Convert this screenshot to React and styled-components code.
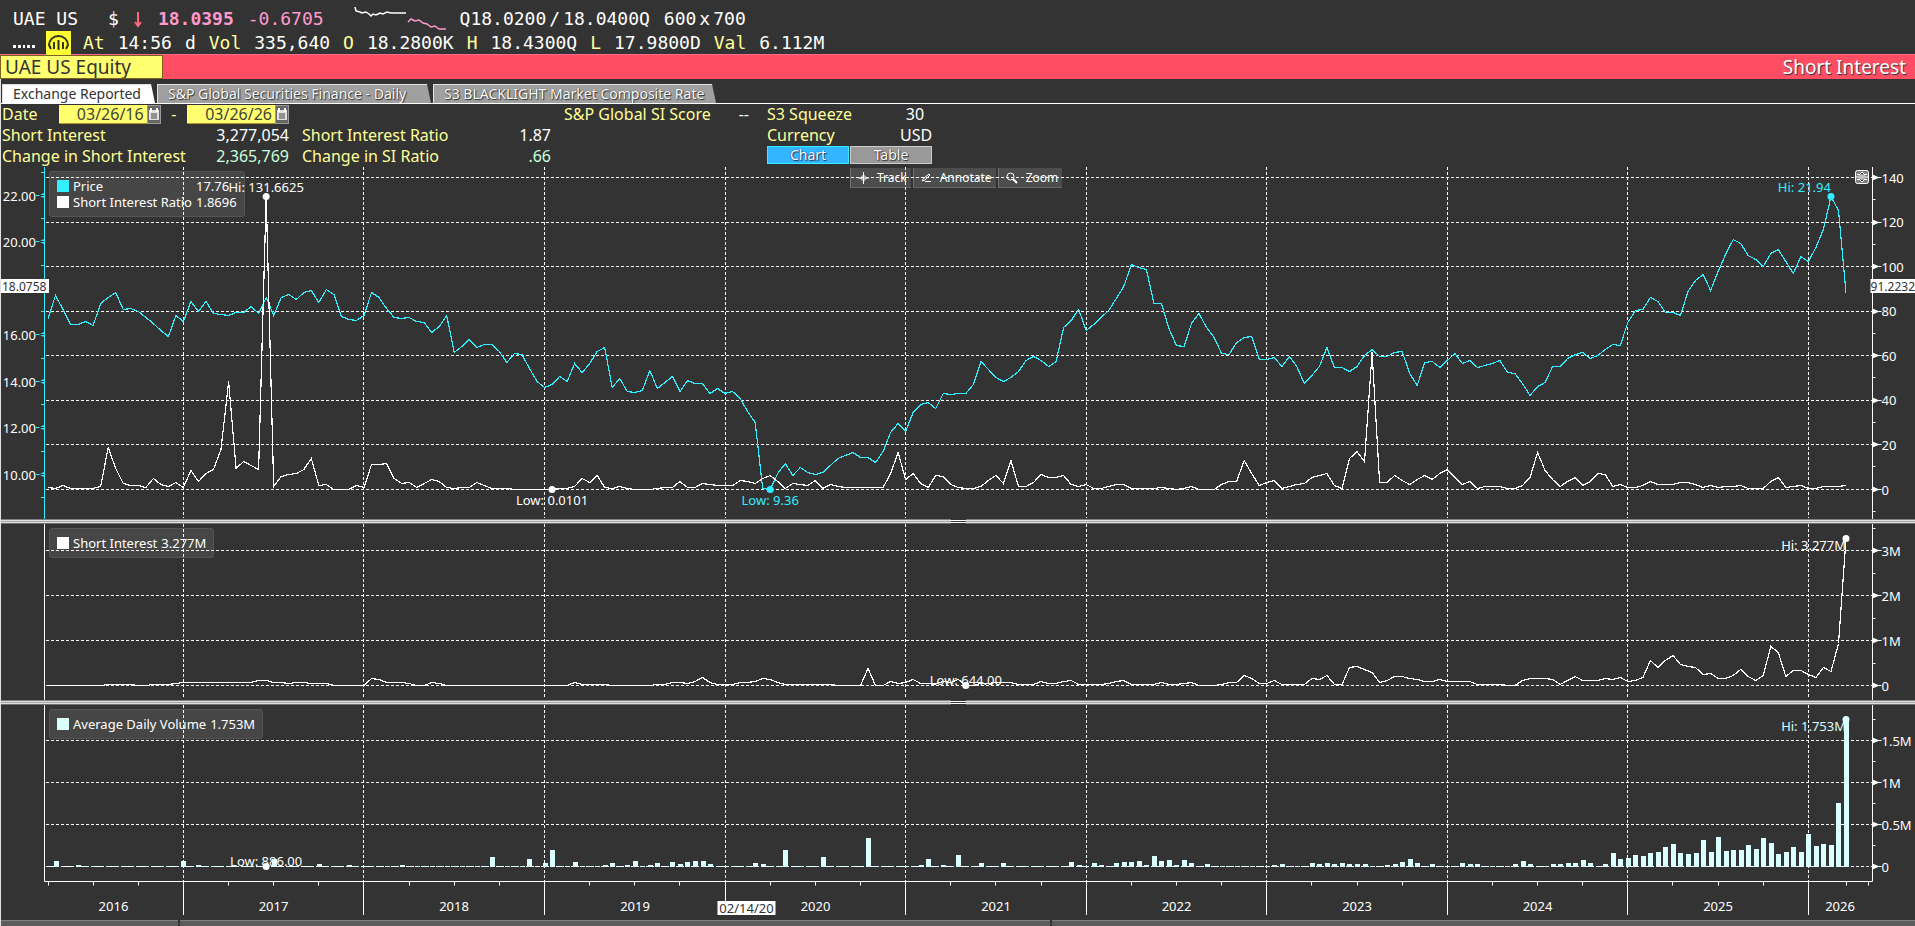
import React, { useEffect, useRef, useState } from 'react';
import styled, { createGlobalStyle } from 'styled-components';

const GlobalStyle = createGlobalStyle`
  * {
    box-sizing: border-box;
  }

  body {
    margin: 0;
    background: #333333;
    color: #ffffff;
    font-family: 'Noto Sans', 'Open Sans', sans-serif;
    font-size: 16px;
  }

  button,
  input {
    font-family: inherit;
    margin: 0;
  }
`;

const CYAN = '#33eeff';
const PALE = '#d9ffff';

/* ---------- quote header ---------- */

const Quote = styled.header`
  height: 54px;
  padding: 7px 0 0 13px;
  font-family: 'DejaVu Sans Mono', monospace;
  font-size: 18px;
  line-height: 24px;
  white-space: pre;
`;

const QuoteLine = styled.div`
  display: flex;
  align-items: center;
  gap: ${(p) => p.$gap}px;
  height: 24px;
`;

const Ticker = styled.span`
  margin-right: 16px;
`;

const Last = styled.span`
  color: #ff99cc;
  font-weight: bold;
`;

const Change = styled.span`
  color: #ff99cc;
  margin-right: 16px;
`;

const BidAsk = styled.span`
  display: flex;
  gap: 3px;
`;

const Tag = styled.span`
  color: #ffff99;
`;

const Dots = styled.span`
  display: flex;
  gap: 2px;
  width: 22px;
  padding-top: 7px;

  i {
    width: 3px;
    height: 3px;
    background: #ffffff;
  }
`;

const Gauge = styled.svg`
  width: 25px;
  height: 24px;
  background: #ffff33;
  margin: 0 -1px 0 -2px;
`;

const Band = styled.div`
  display: flex;
  align-items: center;
  justify-content: space-between;
  height: 25px;
  padding-right: 9px;
  background: #ff4d64;
  border-top: 1px solid #ff6b88;
`;

const Security = styled.input`
  width: 163px;
  height: 24px;
  padding: 0 4px;
  border: 1px solid #806020;
  background: #ffff70;
  color: #333333;
  font-size: 19px;
  line-height: 22px;
`;

const Title = styled.h1`
  margin: 0;
  font-size: 19px;
  line-height: 24px;
  font-weight: 400;
  text-shadow: 1px 1px 1px #333333;
`;

/* ---------- tabs ---------- */

const Page = styled.main`
  border-left: 1px solid #e0e0e0;
`;

const Tabs = styled.nav`
  display: flex;
  gap: 2px;
  padding: 5px 0 0 1px;
  border-bottom: 1px solid #ffffff;
`;

const Tab = styled.button`
  width: ${(p) => p.$width}px;
  height: 19px;
  padding: 0 0 0 10px;
  border: 0;
  border-top: 1px solid #e0e0e0;
  border-left: 1px solid #e0e0e0;
  background: ${(p) => (p.$active ? '#ffffff' : '#a0a0a0')};
  color: ${(p) => (p.$active ? '#333333' : '#ffffff')};
  font-size: 14px;
  line-height: 18px;
  text-align: left;
  white-space: nowrap;
  text-shadow: ${(p) => (p.$active ? 'none' : '0 0 1px #333333, 1px 1px 1px #333333')};
  clip-path: polygon(0 0, calc(100% - 4px) 0, 100% 100%, 0 100%);
`;

/* ---------- summary form ---------- */

const Summary = styled.section`
  display: flex;
  height: 63px;
  line-height: 21px;
  padding-left: 1px;
  white-space: nowrap;
`;

const Block = styled.div`
  width: ${(p) => p.$width}px;
  margin-right: ${(p) => p.$after || 0}px;
  padding-top: ${(p) => (p.$skipRow ? 21 : 0)}px;
`;

const Row = styled.div`
  display: flex;
  justify-content: space-between;
  align-items: center;
  height: 21px;
`;

const Name = styled.label`
  color: #ffff99;
`;

const Value = styled.span`
  color: ${(p) => (p.$pale ? '#ccffdd' : '#ffffff')};
`;

const Centered = styled.span`
  width: 30px;
  margin-right: 2px;
  text-align: center;
`;

const DateField = styled.span`
  display: flex;
  height: 19px;
`;

const DateInput = styled.input`
  width: 88px;
  height: 19px;
  padding: 0 3px 0 0;
  border: 0;
  border-bottom: 1px solid #b38f33;
  background: #ffff70;
  color: #444433;
  text-align: right;
  font-size: 16px;
`;

const CalendarButton = styled.button`
  width: 14px;
  height: 19px;
  padding: 0;
  border: 1px solid #999999;
  background: #666666;

  svg {
    display: block;
  }
`;

const Switch = styled.div`
  display: flex;
  gap: 1px;
`;

const ViewButton = styled.button`
  width: 82px;
  height: 18px;
  padding: 0;
  border: 1px solid ${(p) => (p.$on ? '#33eeff' : '#cccccc')};
  background: ${(p) => (p.$on ? '#33b5ff' : '#999999')};
  color: #ffffff;
  font-size: 14px;
  line-height: 16px;
  text-shadow: 0 0 1px ${(p) => (p.$on ? '#0033cc' : '#333333')}, 1px 1px 1px #333333;
`;

/* ---------- charts ---------- */

const Panel = styled.section`
  position: relative;
`;

const Canvas = styled.svg`
  position: relative;
  z-index: 1;
  display: block;
  width: 100%;
  height: ${(p) => p.$height}px;
  pointer-events: none;
  font-size: 13px;
  fill: #ffffff;
`;

const Legend = styled.div`
  position: absolute;
  left: 48px;
  top: 4px;
  display: grid;
  grid-template-columns: 12px auto auto;
  column-gap: 4px;
  align-items: center;
  padding: 6px 7px;
  border: 1px solid #555555;
  border-radius: 3px;
  background: #464646;
  font-size: 13px;
  line-height: 16px;
  white-space: nowrap;
`;

const Swatch = styled.i`
  width: 12px;
  height: 12px;
  background: ${(p) => p.$color};
`;

const Tools = styled.div`
  position: absolute;
  left: 849px;
  top: 1px;
  display: flex;
  gap: 2px;
`;

const Tool = styled.button`
  display: flex;
  align-items: center;
  gap: 8px;
  height: 20px;
  padding: 0 4px 0 7px;
  border: 0;
  border-left: 1px solid #707070;
  border-bottom: 1px solid #666666;
  background: #4d4d4d;
  color: #ffffff;
  font-size: 12px;
  white-space: nowrap;
`;

const MenuButton = styled.button`
  position: absolute;
  z-index: 2;
  right: 46px;
  top: 3px;
  width: 14px;
  height: 14px;
  padding: 0;
  border: 0;
  background: none;

  svg {
    display: block;
  }
`;

const Splitter = styled.div`
  display: flex;
  justify-content: center;
  height: 5px;
  background: linear-gradient(#808080 1px, #e0e0e0 1px, #e0e0e0 2px, #a8a8a8 2px, #a8a8a8 3px, #e0e0e0 3px, #e0e0e0 4px, #707070 4px);
`;

const Grip = styled.div`
  width: 15px;
  background: linear-gradient(#333333 1px, #ffffff 1px, #ffffff 2px, #333333 2px, #333333 3px, #ffffff 3px, #ffffff 4px, #333333 4px);
`;

const Scrollbar = styled.div`
  display: grid;
  grid-template-columns: 177px 870px 1fr;
  gap: 2px;
  height: 6px;

  i {
    border-top: 1px solid #808080;
    background: #5c5c5c;
  }
`;

// Two settlement dates a month, March 2016 to March 2026.
// Every series is kept as height above the panel's zero line.
const PRICE = [
  171, 194, 180, 165, 165, 168, 164, 186, 192, 197, 180, 181, 178, 172, 166, 159, 153, 174,
  168, 188, 178, 188, 176, 175, 174, 177, 177, 183, 176, 192, 174, 192, 195, 190, 197, 199, 187, 200, 195, 173, 170, 169,
  174, 197, 192, 181, 172, 171, 172, 168, 167, 157, 163, 174, 137, 143, 150, 142, 145, 145, 138, 127, 136, 135, 121, 108,
  102, 105, 113, 108, 126, 117, 126, 138, 142, 102, 111, 98, 97, 99, 119, 101, 107, 113, 98, 109, 106, 106, 96, 101,
  96, 98, 91, 78, 67, 1, 0, 16, 26, 14, 22, 17, 15, 17, 24, 31, 34, 37, 32, 32, 27, 38, 57, 66,
  58, 77, 85, 87, 81, 96, 95, 96, 96, 105, 128, 120, 112, 108, 112, 118, 129, 133, 129, 123, 128, 162, 169, 180,
  159, 165, 172, 179, 191, 203, 225, 222, 220, 186, 186, 161, 144, 143, 166, 176, 162, 152, 136, 135, 147, 152, 153, 130,
  130, 132, 123, 133, 123, 106, 114, 123, 142, 122, 122, 118, 123, 134, 140, 133, 133, 137, 138, 116, 104, 127, 128, 122,
  129, 136, 126, 129, 122, 124, 126, 129, 117, 116, 106, 94, 103, 107, 123, 123, 131, 135, 137, 131, 134, 140, 145, 144,
  167, 179, 180, 192, 188, 177, 177, 174, 198, 209, 215, 199, 218, 235, 250, 246, 234, 230, 223, 236, 240, 228, 216, 233,
  228, 242, 260, 293, 279, 197,
];

const RATIO = [
  2, 1, 4, 1, 1, 1, 1, 3, 42, 21, 6, 4, 4, 2, 11, 5, 3, 7,
  2, 19, 8, 16, 20, 40, 108, 21, 28, 24, 20, 293, 3, 13, 15, 16, 20, 31, 4, 5, 0, 0, 0, 4,
  2, 25, 25, 26, 11, 6, 7, 2, 6, 10, 8, 2, 1, 2, 2, 7, 4, 1, 1, 1, 0, 0, 0, 0,
  0, 0, 1, 1, 3, 11, 7, 14, 2, 1, 3, 1, 0, 0, 0, 1, 2, 2, 8, 2, 2, 6, 5, 4,
  4, 4, 9, 8, 6, 11, 14, 8, 1, 6, 5, 4, 9, 1, 5, 3, 2, 2, 2, 2, 2, 2, 16, 37,
  10, 16, 6, 2, 14, 13, 5, 2, 1, 1, 3, 9, 14, 6, 29, 3, 3, 7, 15, 12, 12, 14, 5, 3,
  5, 1, 1, 3, 5, 5, 1, 1, 1, 1, 2, 1, 0, 1, 3, 0, 0, 0, 5, 8, 8, 29, 16, 4,
  7, 9, 1, 3, 5, 6, 12, 14, 16, 4, 1, 31, 38, 28, 137, 7, 7, 14, 9, 5, 10, 14, 10, 16,
  20, 12, 5, 8, 1, 3, 3, 3, 1, 1, 4, 12, 37, 19, 10, 3, 8, 12, 4, 8, 16, 15, 3, 5,
  2, 2, 4, 8, 5, 5, 5, 7, 7, 5, 2, 4, 2, 3, 3, 4, 1, 1, 1, 8, 12, 2, 3, 4,
  1, 1, 3, 3, 3, 4,
];

const INTEREST = [
  0, 0, 0, 0, 0, 0, 0, 0, 1, 1, 1, 1, 0, 0, 1, 1, 1, 2,
  3, 3, 3, 3, 3, 3, 3, 3, 3, 3, 5, 5, 3, 3, 2, 3, 3, 2, 2, 2, 0, 0, 0, 0,
  0, 7, 6, 3, 3, 3, 2, 0, 0, 3, 2, 0, 0, 0, 0, 0, 0, 0, 0, 0, 0, 0, 0, 0,
  0, 0, 0, 0, 3, 1, 1, 1, 1, 0, 0, 0, 0, 0, 0, 1, 1, 3, 3, 2, 4, 8, 3, 1,
  1, 1, 3, 3, 4, 7, 6, 3, 1, 1, 1, 1, 1, 1, 1, 0, 0, 0, 0, 17, 0, 0, 4, 2,
  3, 6, 2, 2, 2, 4, 3, 6, 0, 0, 2, 2, 3, 3, 3, 1, 1, 1, 4, 2, 2, 4, 5, 1,
  1, 1, 1, 2, 4, 5, 1, 1, 1, 1, 3, 1, 1, 2, 3, 0, 0, 0, 1, 3, 3, 10, 7, 2,
  2, 5, 1, 1, 1, 1, 7, 6, 10, 1, 1, 18, 19, 16, 13, 3, 5, 9, 9, 7, 6, 4, 4, 6,
  4, 4, 4, 4, 1, 1, 1, 1, 0, 0, 5, 7, 7, 7, 6, 1, 5, 9, 5, 5, 5, 7, 6, 8,
  4, 5, 8, 25, 18, 25, 30, 21, 19, 18, 11, 12, 7, 7, 10, 16, 9, 5, 10, 39, 33, 9, 15, 15,
  11, 8, 18, 14, 42, 147,
];

const VOLUME = [
  1, 6, 1, 1, 2, 1, 1, 1, 1, 1, 1, 1, 1, 1, 1, 1, 1, 1,
  6, 1, 2, 1, 1, 1, 1, 1, 1, 1, 1, 1, 8, 1, 1, 1, 1, 1, 3, 1, 1, 1, 2, 1,
  1, 1, 1, 1, 1, 2, 1, 1, 1, 1, 1, 1, 1, 1, 1, 1, 1, 10, 1, 1, 1, 1, 8, 1,
  4, 17, 1, 1, 5, 1, 1, 1, 2, 4, 1, 2, 6, 1, 2, 4, 1, 5, 3, 5, 6, 6, 3, 1,
  1, 1, 1, 1, 4, 3, 1, 1, 17, 1, 1, 1, 1, 10, 1, 1, 1, 1, 1, 29, 1, 1, 1, 1,
  1, 1, 2, 8, 1, 2, 1, 12, 1, 1, 4, 1, 1, 4, 1, 1, 1, 1, 1, 1, 1, 1, 5, 2,
  1, 4, 2, 1, 4, 5, 5, 6, 2, 11, 6, 7, 2, 7, 4, 1, 3, 1, 1, 1, 1, 1, 1, 1,
  1, 2, 3, 1, 1, 1, 4, 3, 4, 3, 4, 3, 3, 3, 1, 1, 2, 3, 5, 8, 4, 1, 3, 1,
  1, 1, 4, 3, 3, 1, 1, 1, 1, 3, 6, 3, 1, 1, 3, 3, 4, 4, 7, 4, 1, 3, 14, 8,
  9, 12, 11, 14, 15, 20, 23, 14, 13, 14, 27, 15, 30, 16, 17, 17, 22, 18, 29, 24, 13, 15, 20, 15,
  33, 21, 23, 22, 64, 148,
];

const LEFT = 43;
const YEARS = [2017, 2018, 2019, 2020, 2021, 2022, 2023, 2024, 2025, 2026];

const crisp = (n) => Math.floor(n) + 0.5;

function useWidth() {
  const ref = useRef(null);
  const [width, setWidth] = useState(1914);

  useEffect(() => {
    const measure = () => setWidth(ref.current.clientWidth);
    measure();
    const observer = new ResizeObserver(measure);
    observer.observe(ref.current);
    return () => observer.disconnect();
  }, []);

  return [ref, width];
}

const scaleX = (width) => (i) => LEFT + 4 + (i * (width - LEFT - 73)) / 239;
const yearX = (x, n) => crisp(x(18 + n * 24));

const Grid = ({ x, right, bottom, rows }) => (
  <g stroke="#ffffff" strokeDasharray="3 2" shapeRendering="crispEdges">
    {rows.map((y) => (
      <line key={y} x1={LEFT + 2} x2={right} y1={crisp(y)} y2={crisp(y)} />
    ))}
    {YEARS.map((year, n) => (
      <line key={year} x1={yearX(x, n)} x2={yearX(x, n)} y1="0" y2={bottom} />
    ))}
  </g>
);

const RightAxis = ({ right, height, ticks, minor }) => (
  <g>
    <path d={`M${right} 0V${height}`} stroke="#ffffff" />
    {ticks.map(([y, label]) => (
      <g key={label}>
        <path d={`M${right} ${crisp(y) - 3}l7 3-7 3zM${right} ${crisp(y) - 0.5}h9v1h-9z`} />
        <text x={right + 9} y={y + 5}>{label}</text>
      </g>
    ))}
    {minor.map((y) => (
      <path key={y} d={`M${right} ${crisp(y)}h3`} stroke="#ffffff" />
    ))}
  </g>
);

const Line = ({ x, base, data, color }) => (
  <polyline
    points={data.map((h, i) => `${x(i).toFixed(1)},${base - h}`).join(' ')}
    fill="none"
    stroke={color}
    strokeWidth="1.2"
    shapeRendering="crispEdges"
  />
);

const Mark = ({ cx, cy, color = '#ffffff', label, dx = 0, dy, anchor = 'middle' }) => (
  <g fill={color}>
    <circle cx={cx} cy={cy} r="3.5" />
    <text x={cx + dx} y={cy + dy} textAnchor={anchor}>{label}</text>
  </g>
);

const PriceChart = () => {
  const [ref, width] = useWidth();
  const x = scaleX(width);
  const right = width - 42.5;
  const base = 322.5;
  const rows = [7, 6, 5, 4, 3, 2, 1, 0].map((n) => base - n * 44.57);

  return (
    <Panel ref={ref}>
      <Legend>
        <Swatch $color={CYAN} />
        <span>Price</span>
        <span>17.76</span>
        <Swatch $color="#ffffff" />
        <span>Short Interest Ratio</span>
        <span>1.8696</span>
      </Legend>
      <Tools>
        <Tool>
          <svg width="11" height="12" viewBox="0 0 11 12" fill="none" stroke="#ffffff">
            <path d="M5.5 0v12M0 6h11" />
            <path d="M5.5 3l3 3-3 3-3-3z" />
          </svg>
          Track
        </Tool>
        <Tool>
          <svg width="11" height="12" viewBox="0 0 11 12" fill="none" stroke="#ffffff">
            <path d="M1 9l2-3 5-4 1 1-5 5zM4 9.500h6" />
          </svg>
          Annotate
        </Tool>
        <Tool>
          <svg width="12" height="12" viewBox="0 0 12 12" fill="none" stroke="#ffffff">
            <circle cx="4.5" cy="4.5" r="3.5" />
            <path d="M7 7l4 4" strokeWidth="2" />
          </svg>
          Zoom
        </Tool>
      </Tools>
      <MenuButton aria-label="Chart options">
        <svg width="14" height="14" viewBox="0 0 14 14">
          <rect x="0.5" y="0.5" width="13" height="13" rx="2" fill="#808080" stroke="#ffffff" />
          <path d="M1 7h12M2 4.5h10M2 9.5h10" stroke="#ffffff" />
          <path d="M4 5l3-3 3 3zM4 9l3 3 3-3z" fill="#333333" stroke="#ffffff" />
        </svg>
      </MenuButton>
      <Canvas $height={352}>
        <Grid x={x} right={right} bottom={351} rows={rows} />
        <path d={`M${LEFT + 0.5} 0V352`} stroke={CYAN} />
        {[22, 20, 18, 16, 14, 12, 10].map((price, n) => {
          const y = crisp(28.5 + n * 46.43);
          return (
            <g key={price}>
              <path d={`M${LEFT + 1} ${y - 3}l-6 3 6 3zM${LEFT - 8} ${y - 0.5}h8v1h-8z`} fill={CYAN} />
              <path d={`M${LEFT} ${y - 23}h-3`} stroke={CYAN} />
              {/* the crosshair readout sits where 18.00 would be */}
              {price !== 18 && (
                <text x={LEFT - 8} y={y + 5} textAnchor="end">{`${price}.00`}</text>
              )}
            </g>
          );
        })}
        <path d={`M${LEFT} 330.5h-3`} stroke={CYAN} />
        <RightAxis
          right={right}
          height={352}
          ticks={rows.map((y, n) => [y, 140 - n * 20])}
          minor={rows.map((y) => y + 22)}
        />
        <Line x={x} base={base} data={PRICE} color={CYAN} />
        <Line x={x} base={base} data={RATIO} color="#ffffff" />
        <Mark cx={x(29)} cy={29.5} label="Hi: 131.6625" dy={-5} />
        <Mark cx={x(67)} cy={base} label="Low: 0.0101" dy={15} />
        <Mark cx={x(96)} cy={base} label="Low: 9.36" dy={15} color={CYAN} />
        <Mark cx={x(237)} cy={29.5} label="Hi: 21.94" dy={-5} anchor="end" color={CYAN} />
        <g fontSize="12">
          <rect x="0" y="112" width="48" height="14" />
          <text x="1" y="124" fill="#333333">18.0758</text>
          <rect x={right - 2} y="112" width="45" height="14" />
          <text x={width} y="124" fill="#333333" textAnchor="end">91.2232</text>
        </g>
      </Canvas>
    </Panel>
  );
};

const InterestChart = () => {
  const [ref, width] = useWidth();
  const x = scaleX(width);
  const right = width - 42.5;
  const base = 161.5;
  const rows = [3, 2, 1, 0].map((n) => base - n * 45);

  return (
    <Panel ref={ref}>
      <Legend>
        <Swatch $color="#ffffff" />
        <span>Short Interest</span>
        <span>3.277M</span>
      </Legend>
      <Canvas $height={176}>
        <Grid x={x} right={right} bottom={174} rows={rows} />
        <path d={`M${LEFT + 0.5} 0V176`} stroke="#ffffff" />
        <RightAxis
          right={right}
          height={176}
          ticks={[[26.5, '3M'], [71.5, '2M'], [116.5, '1M'], [161.5, '0']]}
          minor={[4, 49, 94, 139]}
        />
        <Line x={x} base={base} data={INTEREST} color="#ffffff" />
        <Mark cx={x(122)} cy={base} label="Low: 644.00" dy={-1} />
        <Mark cx={x(239)} cy={14.5} label="Hi: 3.277M" dy={11} anchor="end" />
      </Canvas>
    </Panel>
  );
};

const VolumeChart = () => {
  const [ref, width] = useWidth();
  const x = scaleX(width);
  const right = width - 42.5;
  const base = 161.5;
  const axis = 176.5;
  const edges = [x(-0.6), ...YEARS.map((year, n) => yearX(x, n)), right - 1];
  const quarters = Array.from({ length: 40 }, (_, n) => x(n * 6)).concat([x(239), right - 4]);

  return (
    <Panel ref={ref}>
      <Legend>
        <Swatch $color={PALE} />
        <span>Average Daily Volume</span>
        <span>1.753M</span>
      </Legend>
      <Canvas $height={215}>
        <Grid x={x} right={right} bottom={176} rows={[35.5, 77.5, 119.5, base]} />
        <path d={`M${LEFT + 0.5} 0V${axis}H${right}`} stroke="#ffffff" fill="none" />
        <RightAxis
          right={right}
          height={axis}
          ticks={[[35.5, '1.5M'], [77.5, '1M'], [119.5, '0.5M'], [base, '0']]}
          minor={[14, 56, 98, 140]}
        />
        {VOLUME.map((h, i) => (
          <rect
            key={i}
            x={Math.round(x(i) - 2)}
            y={162 - h}
            width="5"
            height={h}
            fill={PALE}
          />
        ))}
        {quarters.map((q) => (
          <path key={q} d={`M${crisp(q)} ${axis}v4`} stroke="#ffffff" />
        ))}
        {YEARS.map((year, n) => (
          <path key={year} d={`M${yearX(x, n)} ${axis}V210`} stroke="#ffffff" />
        ))}
        {[2016, ...YEARS].map((year, n) => (
          <text key={year} x={(edges[n] + edges[n + 1]) / 2} y="206" textAnchor="middle">
            {year}
          </text>
        ))}
        <Mark cx={x(29)} cy={base} label="Low: 886.00" dy={-1} />
        <Mark cx={x(239)} cy={14.5} label="Hi: 1.753M" dy={11} anchor="end" color={PALE} />
        <rect x={yearX(x, 3) - 8} y="196" width="58" height="14" />
        <text x={yearX(x, 3) + 21} y="208" textAnchor="middle" fill="#333333">02/14/20</text>
      </Canvas>
    </Panel>
  );
};

const CalendarIcon = () => (
  <svg width="12" height="17" viewBox="0 0 12 17">
    <path d="M1 4h10v10H1z" fill="#e0e0e0" />
    <path d="M3 2v4M9 2v4" stroke="#ffffff" strokeWidth="2" />
    <path d="M3 8h6M3 10h6M3 12h6" stroke="#444444" />
  </svg>
);

const DatePicker = ({ id, label, value }) => (
  <DateField>
    <DateInput id={id} aria-label={label} defaultValue={value} />
    <CalendarButton aria-label={`Pick ${label}`}>
      <CalendarIcon />
    </CalendarButton>
  </DateField>
);

const TABS = [
  { name: 'Exchange Reported', width: 153 },
  { name: 'S&P Global Securities Finance - Daily', width: 274 },
  { name: 'S3 BLACKLIGHT Market Composite Rate', width: 283 },
];

const QuoteHeader = () => (
  <Quote>
    <QuoteLine $gap={14}>
      <Ticker>UAE US</Ticker>
      <span>$</span>
      <svg width="11" height="24" viewBox="0 0 11 24" fill="none" stroke="#ff6680" strokeWidth="2">
        <path d="M5 5v14M2 15l3 4 3-4" />
      </svg>
      <Last>18.0395</Last>
      <Change>-0.6705</Change>
      <svg width="92" height="24" viewBox="0 0 92 24" fill="none" strokeWidth="1.5">
        <path d="M1 0l1 4 4 1 2 1 4-1 3 2 2 2 2-2 3 1 4-2 3 1 4-2 4 1h15" stroke="#ffffff" />
        <path d="M54 15l3-3 4 2 4-1 4 3 4 1 4 3 4-1 4 3 7 0" stroke="#ff99cc" />
      </svg>
      <BidAsk>
        <span>Q18.0200</span>
        <span>/</span>
        <span>18.0400Q</span>
      </BidAsk>
      <BidAsk>
        <span>600</span>
        <span>x</span>
        <span>700</span>
      </BidAsk>
    </QuoteLine>
    <QuoteLine $gap={13}>
      <Dots>
        <i /><i /><i /><i /><i />
      </Dots>
      <Gauge viewBox="0 0 25 24" fill="none" stroke="#333322" strokeWidth="2">
        <path d="M5 18l-2-4a9.500 9 0 0 1 19 0l-2 4" />
        <path d="M12.500 9v10M8 11v7M17 11v7" />
      </Gauge>
      <Tag>At</Tag>
      <span>14:56</span>
      <span>d</span>
      <Tag>Vol</Tag>
      <span>335,640</span>
      <Tag>O</Tag>
      <span>18.2800K</span>
      <Tag>H</Tag>
      <span>18.4300Q</span>
      <Tag>L</Tag>
      <span>17.9800D</span>
      <Tag>Val</Tag>
      <span>6.112M</span>
    </QuoteLine>
  </Quote>
);

const App = () => {
  const [tab, setTab] = useState(0);
  const [view, setView] = useState('Chart');

  return (
    <>
      <GlobalStyle />
      <QuoteHeader />
      <Band>
        <Security aria-label="Security" defaultValue="UAE US Equity" />
        <Title>Short Interest</Title>
      </Band>
      <Page>
        <Tabs>
          {TABS.map(({ name, width }, i) => (
            <Tab key={name} $width={width} $active={i === tab} onClick={() => setTab(i)}>
              {name}
            </Tab>
          ))}
        </Tabs>
        <Summary>
          <Block $width={287} $after={13}>
            <Row>
              <Name htmlFor="from">Date</Name>
              <span />
              <DatePicker id="from" label="start date" value="03/26/16" />
              <Name as="span">-</Name>
              <DatePicker id="to" label="end date" value="03/26/26" />
            </Row>
            <Row>
              <Name as="span">Short Interest</Name>
              <Value>3,277,054</Value>
            </Row>
            <Row>
              <Name as="span">Change in Short Interest</Name>
              <Value $pale>2,365,769</Value>
            </Row>
          </Block>
          <Block $width={249} $after={13} $skipRow>
            <Row>
              <Name as="span">Short Interest Ratio</Name>
              <Value>1.87</Value>
            </Row>
            <Row>
              <Name as="span">Change in SI Ratio</Name>
              <Value $pale>.66</Value>
            </Row>
          </Block>
          <Block $width={185} $after={18}>
            <Row>
              <Name as="span">S&amp;P Global SI Score</Name>
              <Value>--</Value>
            </Row>
          </Block>
          <Block $width={165}>
            <Row>
              <Name as="span">S3 Squeeze</Name>
              <Centered>30</Centered>
            </Row>
            <Row>
              <Name as="span">Currency</Name>
              <Centered>USD</Centered>
            </Row>
            <Switch>
              {['Chart', 'Table'].map((name) => (
                <ViewButton key={name} $on={view === name} onClick={() => setView(name)}>
                  {name}
                </ViewButton>
              ))}
            </Switch>
          </Block>
        </Summary>
        <PriceChart />
        <Splitter>
          <Grip />
        </Splitter>
        <InterestChart />
        <Splitter>
          <Grip />
        </Splitter>
        <VolumeChart />
        <Scrollbar>
          <i />
          <i />
          <i />
        </Scrollbar>
      </Page>
    </>
  );
};

export default App;
